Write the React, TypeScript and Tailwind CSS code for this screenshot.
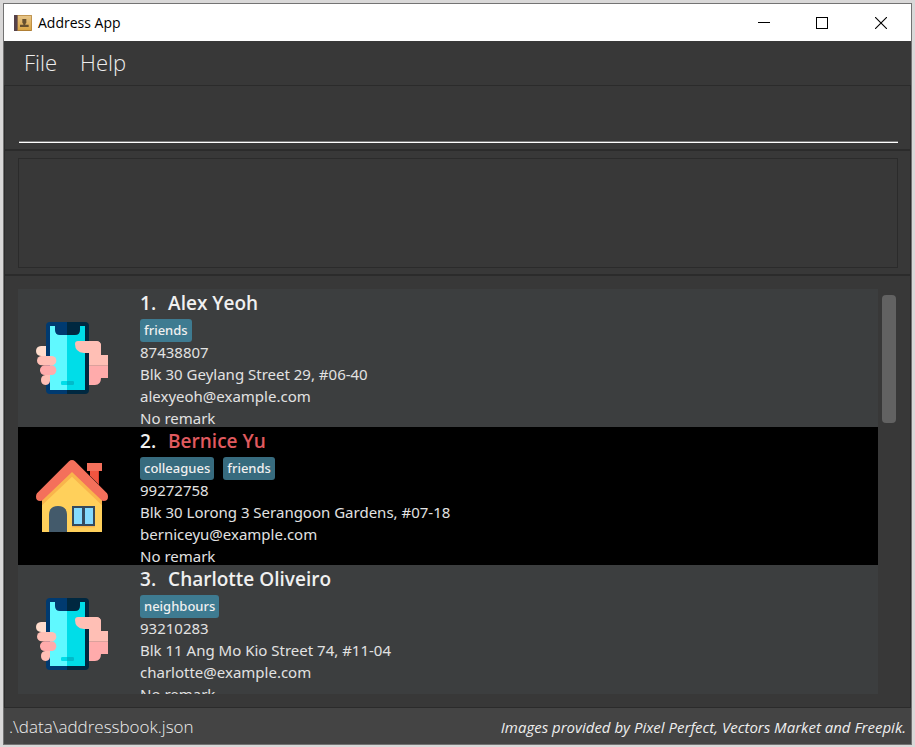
import React from "react";

type Person = {
  name: string;
  tags: string[];
  phone: string;
  address: string;
  email: string;
  remark: string;
  picture: "phone" | "house";
  highlighted?: boolean;
};

const people: Person[] = [
  { name: "Alex Yeoh", tags: ["friends"], phone: "87438807", address: "Blk 30 Geylang Street 29, #06-40", email: "alexyeoh@example.com", remark: "No remark", picture: "phone" },
  { name: "Bernice Yu", tags: ["colleagues", "friends"], phone: "99272758", address: "Blk 30 Lorong 3 Serangoon Gardens, #07-18", email: "berniceyu@example.com", remark: "No remark", picture: "house", highlighted: true },
  { name: "Charlotte Oliveiro", tags: ["neighbours"], phone: "93210283", address: "Blk 11 Ang Mo Kio Street 74, #11-04", email: "charlotte@example.com", remark: "No remark", picture: "phone" },
];

function AppIcon() {
  return (
    <svg width="18" height="16" viewBox="0 0 54 48" aria-hidden="true">
      <defs>
        <linearGradient id="cover" x1="0" y1="0" x2="0" y2="1">
          <stop offset="0" stopColor="#e6c58a" />
          <stop offset="1" stopColor="#d9a544" />
        </linearGradient>
      </defs>
      <rect width="54" height="48" rx="2" fill="#b07f35" />
      <rect width="9" height="48" rx="1" fill="#54424a" />
      <rect x="9" width="3" height="48" fill="#8b6a4c" />
      <rect x="12" y="2" width="40" height="43" fill="url(#cover)" />
      <path d="M25 12h12v11l-3 4v2h10v7H18v-7h10v-2l-3-4z" fill="#66502f" />
    </svg>
  );
}

function PhonePicture() {
  return (
    <svg className="size-18" viewBox="48 66 216 216" aria-hidden="true">
      <path d="M207 159V124h24q12 2 12 14v27h21v32h-57z" fill="#ffbfb5" />
      <path d="M207 197h57v37h-21q0 20-18 21h-18z" fill="#ffabab" />
      <path d="M90 66h51v216H90q-12 0-12-12V78q0-12 12-12z" fill="#003a70" />
      <path d="M141 66h54q12 0 12 12v192q0 12-12 12h-54z" fill="#002840" />
      <path d="M90 78h15v12q0 15 15 15h21v165H90z" fill="#60f9ff" />
      <path d="M141 105h24q15 0 15-15V78h15v192h-54z" fill="#00dde8" />
      <path d="M127 243h14v12h-14q-4 0-4-4v-4q0-4 4-4z" fill="#00dde8" />
      <path d="M141 243h17q4 0 4 4v4q0 4-4 4h-17z" fill="#00bbca" />
      <path d="M165 132q0-9 9-9h57q12 2 12 14v22h-51q-27-2-27-27z" fill="#ffbfb5" />
      <path d="M78 138v30H63q-15-2-15-15t15-15z" fill="#ffdccc" />
      <rect x="51" y="168" width="58" height="28" rx="14" fill="#ffbfb5" />
      <rect x="60" y="196" width="49" height="29" rx="14" fill="#ffabab" />
      <path d="M76 225h14v18q-2 12-14 12-13-2-13-15t13-15z" fill="#ffbfb5" />
    </svg>
  );
}

function HousePicture() {
  return (
    <svg className="size-18" viewBox="48 60 216 216" aria-hidden="true">
      <path d="M210 92h27v42l-27-27z" fill="#f05540" />
      <path d="M234 92h3v42l-3-3z" fill="#d9402f" />
      <path d="M201 69h45v24h-45z" fill="#f4705b" />
      <path d="M66 183l90-90 90 90v93H66z" fill="#ffd05b" />
      <path d="M66 176l90-82 90 82v20l-90-86-90 86z" fill="#f9b54c" />
      <path d="M156 60q5 0 9 4l96 96q3 4 3 10 0 13-13 13-4 0-8-4l-87-83-87 83q-4 4-8 4-13 0-13-13 0-6 3-10l96-96q4-4 9-4z" fill="#f4705b" />
      <path d="M87 276v-50q0-28 27-28t27 28v50z" fill="#435a6b" />
      <path d="M156 258h69v4h-69z" fill="#f9b54c" />
      <path d="M156 198h69v60h-69z" fill="#344a5e" />
      <path d="M162 204h24v48h-24zM195 204h24v48h-24z" fill="#84dbff" />
    </svg>
  );
}

function PersonCard({ person, index }: { person: Person; index: number }) {
  return (
    <li className={`flex h-[138px] shrink-0 items-start overflow-hidden ${person.highlighted ? "bg-black" : "bg-[#3c3e3f]"}`}>
      <div className="flex h-full w-[122px] shrink-0 items-center pl-[18px]">
        {person.picture === "phone" ? <PhonePicture /> : <HousePicture />}
      </div>
      <div className="min-w-0 whitespace-nowrap font-['Noto_Sans','Open_Sans',sans-serif] text-[15px] leading-[22px] text-[#e2e2e2]">
        <h2 className="flex h-[30px] gap-3 font-['Open_Sans','Noto_Sans',sans-serif] text-[19px] font-semibold leading-7 text-[#f0f0f0]">
          <span>{index}.</span>
          <span className={person.highlighted ? "text-[#e05a5f]" : ""}>{person.name}</span>
        </h2>
        <ul className="flex h-[22px] gap-[9px]">
          {person.tags.map((tag) => (
            <li key={tag} className={`h-[23px] rounded-[3px] px-1 text-[13px] font-medium leading-[22px] text-[#f0f0f0] ${person.highlighted ? "bg-[#376b7e]" : "bg-[#3e7b91]"}`}>{tag}</li>
          ))}
        </ul>
        <p>{person.phone}</p>
        <p>{person.address}</p>
        <p>{person.email}</p>
        <p>{person.remark}</p>
      </div>
    </li>
  );
}

export default function App() {
  return (
    <div className="h-screen bg-[#d9d8d8] pt-[3px] pr-[3px] pb-[2px] pl-[3px] font-['Open_Sans','Noto_Sans',sans-serif]">
      <div className="flex h-full flex-col border border-[#737373] bg-[#383838]">
        <header className="flex h-[37px] shrink-0 items-center bg-white pl-[10px] text-black">
          <AppIcon />
          <h1 className="ml-[6px] flex-1 text-sm">Address App</h1>
          <button aria-label="Minimize" className="flex h-full w-[58px] items-center justify-center">
            <svg width="12" height="12" viewBox="0 0 12 12" shapeRendering="crispEdges"><path d="M0 5.5h12" stroke="currentColor" /></svg>
          </button>
          <button aria-label="Maximize" className="flex h-full w-[58px] items-center justify-center">
            <svg width="12" height="12" viewBox="0 0 12 12" shapeRendering="crispEdges"><path d="M.5.5h11v11H.5z" fill="none" stroke="currentColor" /></svg>
          </button>
          <button aria-label="Close" className="flex h-full w-[60px] items-center justify-center">
            <svg width="12" height="12" viewBox="0 0 12 12"><path d="M0 0l12 12M12 0L0 12" stroke="currentColor" strokeWidth="1.1" /></svg>
          </button>
        </header>
        <nav className="flex h-11 shrink-0 items-center gap-[23px] pb-[2px] pl-5 text-[22px] font-light text-[#eeeeee]">
          <button>File</button>
          <button>Help</button>
        </nav>
        <div className="flex h-16 shrink-0 flex-col justify-end border border-b-0 border-[#2b2b2b] pr-3 pb-[6px] pl-[14px]">
          <input aria-label="Command" className="h-[50px] w-full border-b border-white bg-transparent text-xl font-light text-white shadow-[inset_0_-1px_0_#7a7a7a] outline-none" />
        </div>
        <div className="h-[125px] shrink-0 border-x border-t-2 border-[#2b2b2b] pt-[7px] pr-3 pl-[13px]">
          <output aria-label="Result" className="block h-[110px] border border-[#2b2b2b]" />
        </div>
        <main className="flex min-h-0 flex-1 border-x border-t-2 border-b border-[#2b2b2b] pt-[13px] pr-[14px] pb-[13px] pl-[13px]">
          <ol className="flex min-w-0 flex-1 flex-col overflow-hidden">
            {people.map((person, i) => (
              <PersonCard key={person.name} person={person} index={i + 1} />
            ))}
          </ol>
          <div className="w-[18px] pt-[6px] pl-1">
            <div className="h-32 w-[14px] rounded bg-[#626262]" />
          </div>
        </main>
        <footer className="flex h-9 shrink-0 items-center justify-between bg-[#444444] px-[5px] pt-[2px] text-[#eeeeee]">
          <span className="text-[17px] font-light">.\data\addressbook.json</span>
          <span className="text-[15px] italic">Images provided by Pixel Perfect, Vectors Market and Freepik.</span>
        </footer>
      </div>
    </div>
  );
}
